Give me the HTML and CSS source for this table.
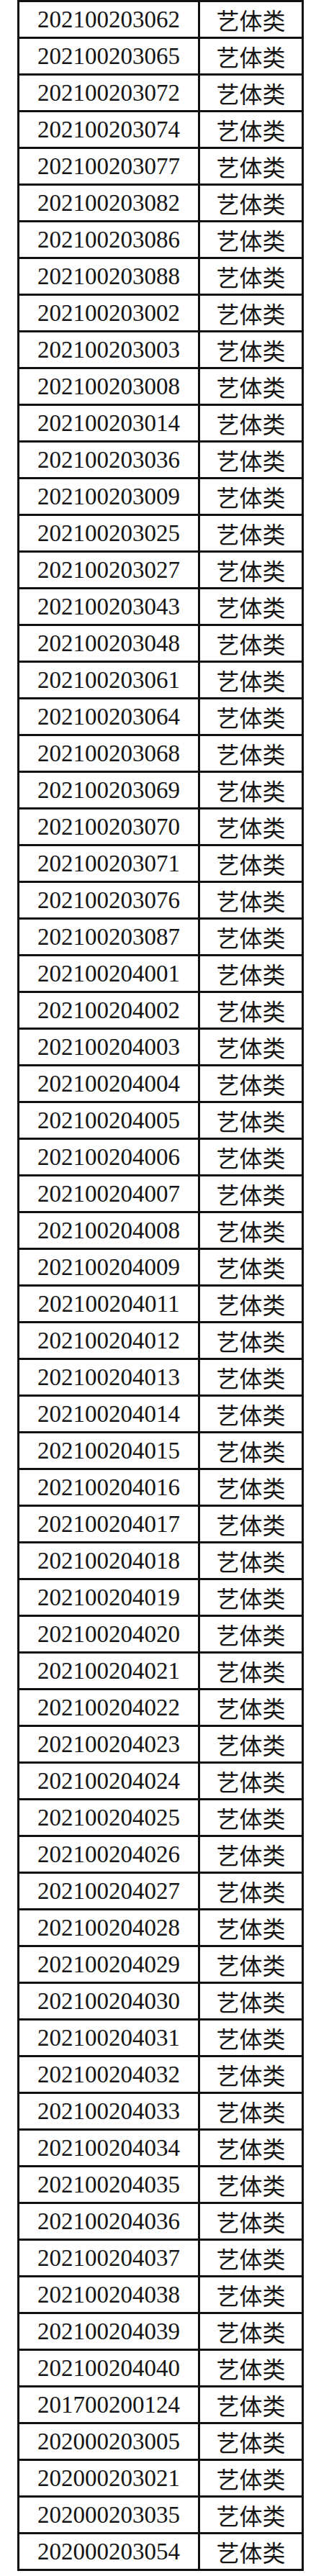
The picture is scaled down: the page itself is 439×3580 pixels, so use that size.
FILE: index.html
```
<!DOCTYPE html>
<html lang="zh">
<head>
<meta charset="utf-8">
<title>名单</title>
<link rel="stylesheet" href="styles.css">
</head>
<body>
<table class="list">
<tbody>
<tr><td class="id">202100203062</td><td class="cat">艺体类</td></tr>
<tr><td class="id">202100203065</td><td class="cat">艺体类</td></tr>
<tr><td class="id">202100203072</td><td class="cat">艺体类</td></tr>
<tr><td class="id">202100203074</td><td class="cat">艺体类</td></tr>
<tr><td class="id">202100203077</td><td class="cat">艺体类</td></tr>
<tr><td class="id">202100203082</td><td class="cat">艺体类</td></tr>
<tr><td class="id">202100203086</td><td class="cat">艺体类</td></tr>
<tr><td class="id">202100203088</td><td class="cat">艺体类</td></tr>
<tr><td class="id">202100203002</td><td class="cat">艺体类</td></tr>
<tr><td class="id">202100203003</td><td class="cat">艺体类</td></tr>
<tr><td class="id">202100203008</td><td class="cat">艺体类</td></tr>
<tr><td class="id">202100203014</td><td class="cat">艺体类</td></tr>
<tr><td class="id">202100203036</td><td class="cat">艺体类</td></tr>
<tr><td class="id">202100203009</td><td class="cat">艺体类</td></tr>
<tr><td class="id">202100203025</td><td class="cat">艺体类</td></tr>
<tr><td class="id">202100203027</td><td class="cat">艺体类</td></tr>
<tr><td class="id">202100203043</td><td class="cat">艺体类</td></tr>
<tr><td class="id">202100203048</td><td class="cat">艺体类</td></tr>
<tr><td class="id">202100203061</td><td class="cat">艺体类</td></tr>
<tr><td class="id">202100203064</td><td class="cat">艺体类</td></tr>
<tr><td class="id">202100203068</td><td class="cat">艺体类</td></tr>
<tr><td class="id">202100203069</td><td class="cat">艺体类</td></tr>
<tr><td class="id">202100203070</td><td class="cat">艺体类</td></tr>
<tr><td class="id">202100203071</td><td class="cat">艺体类</td></tr>
<tr><td class="id">202100203076</td><td class="cat">艺体类</td></tr>
<tr><td class="id">202100203087</td><td class="cat">艺体类</td></tr>
<tr><td class="id">202100204001</td><td class="cat">艺体类</td></tr>
<tr><td class="id">202100204002</td><td class="cat">艺体类</td></tr>
<tr><td class="id">202100204003</td><td class="cat">艺体类</td></tr>
<tr><td class="id">202100204004</td><td class="cat">艺体类</td></tr>
<tr><td class="id">202100204005</td><td class="cat">艺体类</td></tr>
<tr><td class="id">202100204006</td><td class="cat">艺体类</td></tr>
<tr><td class="id">202100204007</td><td class="cat">艺体类</td></tr>
<tr><td class="id">202100204008</td><td class="cat">艺体类</td></tr>
<tr><td class="id">202100204009</td><td class="cat">艺体类</td></tr>
<tr><td class="id">202100204011</td><td class="cat">艺体类</td></tr>
<tr><td class="id">202100204012</td><td class="cat">艺体类</td></tr>
<tr><td class="id">202100204013</td><td class="cat">艺体类</td></tr>
<tr><td class="id">202100204014</td><td class="cat">艺体类</td></tr>
<tr><td class="id">202100204015</td><td class="cat">艺体类</td></tr>
<tr><td class="id">202100204016</td><td class="cat">艺体类</td></tr>
<tr><td class="id">202100204017</td><td class="cat">艺体类</td></tr>
<tr><td class="id">202100204018</td><td class="cat">艺体类</td></tr>
<tr><td class="id">202100204019</td><td class="cat">艺体类</td></tr>
<tr><td class="id">202100204020</td><td class="cat">艺体类</td></tr>
<tr><td class="id">202100204021</td><td class="cat">艺体类</td></tr>
<tr><td class="id">202100204022</td><td class="cat">艺体类</td></tr>
<tr><td class="id">202100204023</td><td class="cat">艺体类</td></tr>
<tr><td class="id">202100204024</td><td class="cat">艺体类</td></tr>
<tr><td class="id">202100204025</td><td class="cat">艺体类</td></tr>
<tr><td class="id">202100204026</td><td class="cat">艺体类</td></tr>
<tr><td class="id">202100204027</td><td class="cat">艺体类</td></tr>
<tr><td class="id">202100204028</td><td class="cat">艺体类</td></tr>
<tr><td class="id">202100204029</td><td class="cat">艺体类</td></tr>
<tr><td class="id">202100204030</td><td class="cat">艺体类</td></tr>
<tr><td class="id">202100204031</td><td class="cat">艺体类</td></tr>
<tr><td class="id">202100204032</td><td class="cat">艺体类</td></tr>
<tr><td class="id">202100204033</td><td class="cat">艺体类</td></tr>
<tr><td class="id">202100204034</td><td class="cat">艺体类</td></tr>
<tr><td class="id">202100204035</td><td class="cat">艺体类</td></tr>
<tr><td class="id">202100204036</td><td class="cat">艺体类</td></tr>
<tr><td class="id">202100204037</td><td class="cat">艺体类</td></tr>
<tr><td class="id">202100204038</td><td class="cat">艺体类</td></tr>
<tr><td class="id">202100204039</td><td class="cat">艺体类</td></tr>
<tr><td class="id">202100204040</td><td class="cat">艺体类</td></tr>
<tr><td class="id">201700200124</td><td class="cat">艺体类</td></tr>
<tr><td class="id">202000203005</td><td class="cat">艺体类</td></tr>
<tr><td class="id">202000203021</td><td class="cat">艺体类</td></tr>
<tr><td class="id">202000203035</td><td class="cat">艺体类</td></tr>
<tr><td class="id">202000203054</td><td class="cat">艺体类</td></tr>
</tbody>
</table>
</body>
</html>
```
FILE: styles.css
```
html, body {
  margin: 0;
  padding: 0;
  background: #fff;
}

.list {
  margin: 0 0 0 24px;
  border-collapse: separate;
  border-spacing: 3px;
  background: #111;
  table-layout: fixed;
}

.list td {
  background: #fff;
  padding: 0;
  height: 48px;
  text-align: center;
  vertical-align: middle;
  color: #141414;
  white-space: nowrap;
  overflow: hidden;
}

.id {
  width: 248px;
  font-family: "Liberation Serif", "Times New Roman", serif;
  font-size: 33px;
  line-height: 48px;
}

.cat {
  width: 141px;
  font-family: "Noto Sans CJK SC", "Noto Sans", sans-serif;
  font-size: 32px;
  line-height: 48px;
}
```
